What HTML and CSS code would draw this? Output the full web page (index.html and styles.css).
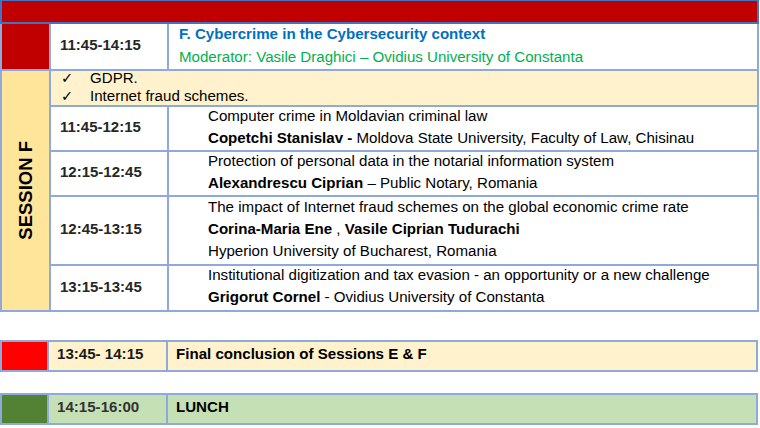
FILE: index.html
```html
<!DOCTYPE html>
<html lang="en">
<head>
<meta charset="utf-8">
<title>Session F</title>
<link rel="stylesheet" href="styles.css">
</head>
<body>
<div class="band"></div>
<div class="session">
  <div class="mark red"></div>
  <div class="time head-time">11:45-14:15</div>
  <div class="head">
    <div class="title">F. Cybercrime in the Cybersecurity context</div>
    <div class="moderator">Moderator: Vasile Draghici – Ovidius University of Constanta</div>
  </div>
  <div class="side"><span class="side-label">SESSION F</span></div>
  <div class="topics">
    <div class="topic"><span class="tick">✓</span><span>GDPR.</span></div>
    <div class="topic"><span class="tick">✓</span><span>Internet fraud schemes.</span></div>
  </div>
  <div class="time">11:45-12:15</div>
  <div class="talk">
    <div>Computer crime in Moldavian criminal law</div>
    <div><b>Copetchi Stanislav -</b> Moldova State University, Faculty of Law, Chisinau</div>
  </div>
  <div class="time">12:15-12:45</div>
  <div class="talk">
    <div>Protection of personal data in the notarial information system</div>
    <div><b>Alexandrescu Ciprian</b> – Public Notary, Romania</div>
  </div>
  <div class="time">12:45-13:15</div>
  <div class="talk">
    <div>The impact of Internet fraud schemes on the global economic crime rate</div>
    <div><b>Corina-Maria Ene</b> , <b>Vasile Ciprian Tudurachi</b></div>
    <div>Hyperion University of Bucharest, Romania</div>
  </div>
  <div class="time">13:15-13:45</div>
  <div class="talk">
    <div>Institutional digitization and tax evasion - an opportunity or a new challenge</div>
    <div><b>Grigorut Cornel</b> - Ovidius University of Constanta</div>
  </div>
</div>

<div class="bar bar-conclusion">
  <div class="bar-mark bright-red"></div>
  <div class="bar-cell bar-time">13:45- 14:15</div>
  <div class="bar-cell">Final conclusion of Sessions E &amp; F</div>
</div>

<div class="bar bar-lunch">
  <div class="bar-mark green"></div>
  <div class="bar-cell bar-time lunch-time">14:15-16:00</div>
  <div class="bar-cell">LUNCH</div>
</div>
</body>
</html>
```
FILE: styles.css
```css
html, body {
  margin: 0;
  padding: 0;
  background: #ffffff;
}
body {
  font-family: "Liberation Sans", Arial, sans-serif;
  font-size: 15.1px;
  color: #000;
}
.band {
  box-sizing: border-box;
  width: 759px;
  height: 24px;
  background: #c00000;
  border: 2px solid #4472c4;
  border-top-width: 1px;
}
.session {
  box-sizing: border-box;
  width: 759px;
  display: grid;
  grid-template-columns: 47px 116px 588px;
  grid-template-rows: 45px 34px 43px 43px 67px 44px;
  gap: 2px;
  padding: 0 2px 2px 2px;
  background: #8eaadb;
}
.session > div {
  background: #ffffff;
}
.session > .red {
  background: #c00000;
}
.time {
  display: flex;
  align-items: center;
  padding: 0 0 4px 9px;
  font-weight: bold;
  font-size: 15px;
  color: #262626;
}
.head {
  display: flex;
  flex-direction: column;
  justify-content: center;
  padding: 0 0 4px 10px;
  line-height: 23px;
}
.title {
  color: #0070c0;
  font-weight: bold;
}
.moderator {
  color: #00b050;
}
.session > .side {
  grid-row: 2 / 7;
  background: #ffe599;
  display: flex;
  align-items: center;
  justify-content: center;
}
.side-label {
  writing-mode: vertical-rl;
  transform: rotate(180deg);
  font-weight: bold;
  font-size: 18.5px;
  line-height: 20px;
}
.session > .topics {
  grid-column: 2 / 4;
  background: #fff2cc;
  display: flex;
  flex-direction: column;
  justify-content: center;
  padding: 0 0 2px 10px;
  line-height: 18px;
}
.topic {
  display: flex;
}
.tick {
  width: 29px;
  font-family: "DejaVu Sans", sans-serif;
  font-size: 14.5px;
}
.talk {
  display: flex;
  flex-direction: column;
  justify-content: center;
  padding: 0 0 4px 39px;
  line-height: 22px;
  white-space: nowrap;
}
.bar {
  box-sizing: border-box;
  width: 758px;
  height: 32px;
  display: grid;
  grid-template-columns: 45px 117px 588px;
  gap: 2px;
  padding: 2px;
  background: #8eaadb;
}
.bar-conclusion {
  margin-top: 28px;
}
.bar-conclusion .bar-cell {
  background: #fff2cc;
}
.bar-lunch {
  margin-top: 21px;
}
.bar-lunch .bar-cell {
  background: #c5e0b4;
}
.bar-mark.bright-red {
  background: #ff0000;
}
.bar-mark.green {
  background: #548235;
}
.bar-cell {
  display: flex;
  align-items: center;
  padding: 0 0 5px 8px;
  font-weight: bold;
  color: #000;
}
.bar-time {
  color: #1a1a1a;
}
.lunch-time {
  color: #333333;
}
```
